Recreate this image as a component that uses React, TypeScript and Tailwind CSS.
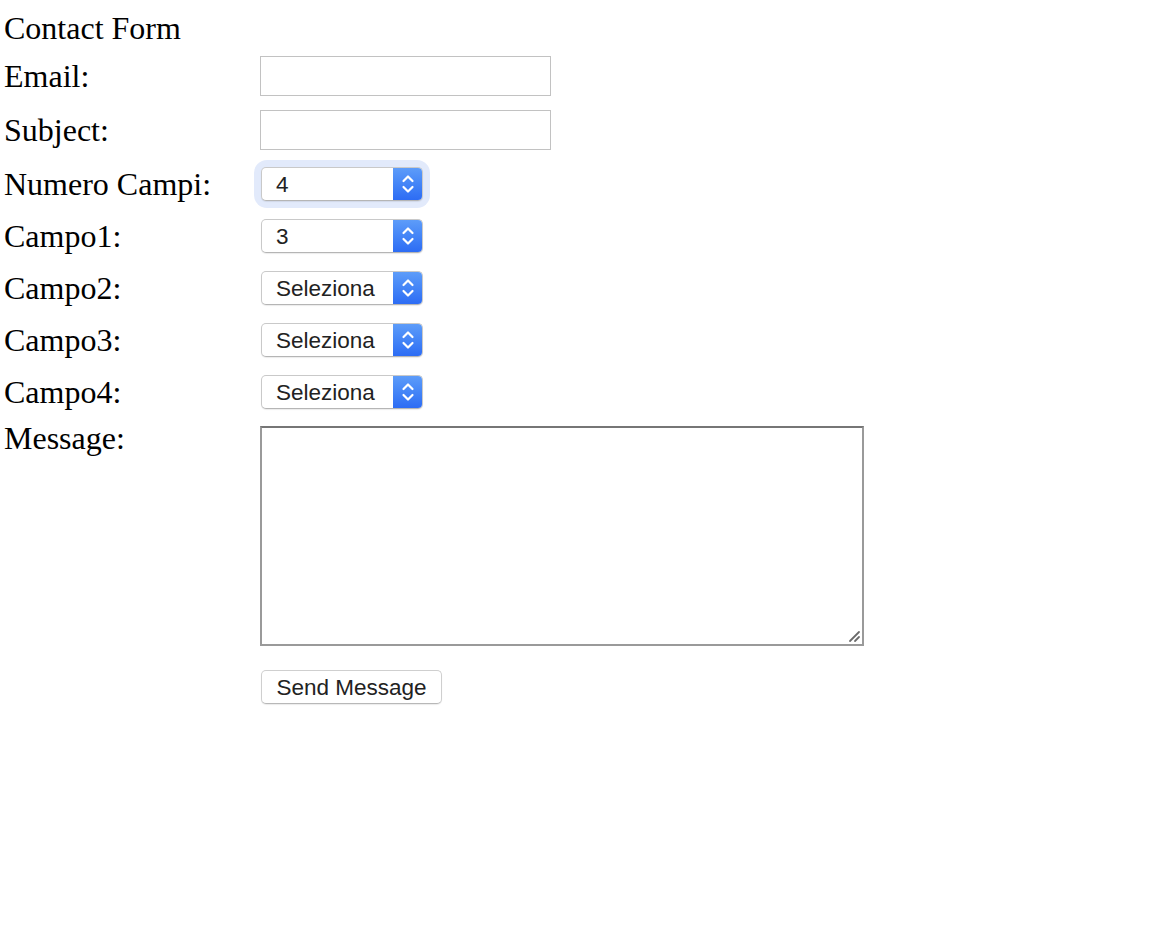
import { useState } from 'react';

const labelCls = 'w-[260px] shrink-0 pl-[4px] text-[32px] leading-[37px] text-black';

function Chevrons() {
  return (
    <svg width="14" height="22" viewBox="0 0 14 22" fill="none" stroke="white" strokeWidth="2.2" strokeLinecap="round" strokeLinejoin="round">
      <path d="M2.5 8 L7 3.5 L11.5 8" />
      <path d="M2.5 14 L7 18.5 L11.5 14" />
    </svg>
  );
}

function MacSelect({ value, focused }: { value: string; focused?: boolean }) {
  return (
    <div className={`ml-px rounded-[6px] ${focused ? 'shadow-[0_0_0_7px_#e2eafb]' : ''}`}>
      <div className="flex h-[34px] w-[162px] overflow-hidden rounded-[5px] border border-[#c9c9c9] border-b-[#b5b5b5] bg-white shadow-[0_1px_1px_rgba(0,0,0,0.08)]">
        <div className="flex flex-1 items-center pl-[14px] pt-[2px] font-['Liberation_Sans',Arial,sans-serif] text-[22.5px] text-[#222]">
          {value}
        </div>
        <div className="flex w-[29px] items-center justify-center bg-gradient-to-b from-[#5d9cf9] to-[#2d6cf4]">
          <Chevrons />
        </div>
      </div>
    </div>
  );
}

export default function App() {
  const [numero] = useState('4');
  const campi = ['3', 'Seleziona', 'Seleziona', 'Seleziona'];

  return (
    <div className="min-h-[940px] bg-white font-['Liberation_Serif','Times_New_Roman',serif]">
      <div className="flex flex-col">
        <div className={`${labelCls} mt-[10px] w-auto`}>Contact Form</div>

        <div className="mt-[9px] flex h-[40px] items-center">
          <div className={labelCls}>Email:</div>
          <input className="h-[40px] w-[291px] border border-[#c2c2c2] px-2 outline-none" />
        </div>

        <div className="mt-[14px] flex h-[40px] items-center">
          <div className={labelCls}>Subject:</div>
          <input className="h-[40px] w-[291px] border border-[#c2c2c2] px-2 outline-none" />
        </div>

        <div className="mt-[17px] flex h-[34px] items-center">
          <div className={labelCls}>Numero Campi:</div>
          <MacSelect value={numero} focused />
        </div>

        {campi.map((v, i) => (
          <div key={i} className="mt-[18px] flex h-[34px] items-center">
            <div className={labelCls}>Campo{i + 1}:</div>
            <MacSelect value={v} />
          </div>
        ))}

        <div className="mt-[11px] flex items-start">
          <div className={labelCls}>Message:</div>
          <div className="relative mt-[6px] h-[220px] w-[604px] border-2 border-[#9a9a9a] border-t-[#767676]">
            <svg className="absolute bottom-[1px] right-[1px]" width="14" height="14" viewBox="0 0 14 14" stroke="#6a6a6a" strokeWidth="1.8" strokeLinecap="round">
              <path d="M3 12 L12 3" />
              <path d="M8 12 L12 8" />
            </svg>
          </div>
        </div>

        <div className="mt-[24px] flex">
          <div className="w-[260px] shrink-0" />
          <button className="ml-px flex h-[34px] w-[181px] items-center justify-center rounded-[5px] border border-[#cfcfcf] border-b-[#b8b8b8] bg-white pt-[2px] font-['Liberation_Sans',Arial,sans-serif] text-[22.5px] text-[#222] shadow-[0_1px_1px_rgba(0,0,0,0.08)]">
            Send Message
          </button>
        </div>
      </div>
    </div>
  );
}
